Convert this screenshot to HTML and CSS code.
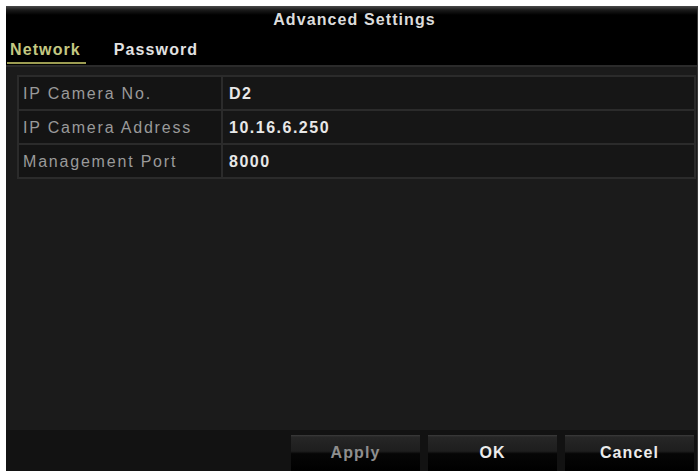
FILE: index.html
```html
<!DOCTYPE html>
<html>
<head>
<meta charset="utf-8">
<link rel="stylesheet" href="styles.css">
</head>
<body>
<div class="dialog">
  <div class="header">
    <div class="title">Advanced Settings</div>
    <div class="tabs">
      <div class="tab active">Network</div>
      <div class="tab">Password</div>
    </div>
  </div>
  <div class="content">
    <div class="grid">
      <div class="label">IP Camera No.</div>
      <div class="value">D2</div>
      <div class="label">IP Camera Address</div>
      <div class="value">10.16.6.250</div>
      <div class="label">Management Port</div>
      <div class="value">8000</div>
    </div>
  </div>
  <div class="footer">
    <div class="btn disabled">Apply</div>
    <div class="btn">OK</div>
    <div class="btn">Cancel</div>
  </div>
</div>
</body>
</html>
```
FILE: styles.css
```css
html, body {
  margin: 0;
  padding: 0;
  background: #ffffff;
}
body {
  font-family: "Liberation Sans", Arial, sans-serif;
  width: 700px;
  height: 473px;
  overflow: hidden;
}
.dialog {
  margin: 6px 0 0 6px;
  width: 691px;
  height: 465px;
  background: #1b1b1b;
  display: flex;
  flex-direction: column;
  border-right: 1px solid #3a3a3a;
}
.header {
  background: linear-gradient(#4a4a4a 0, #1a1a1a 4px, #000 9px, #000 100%);
  height: 59px;
  border-bottom: 2px solid #2b2b2b;
}
.title {
  height: 32px;
  line-height: 28px;
  text-align: center;
  padding-left: 6px;
  color: #dcdcdc;
  font-weight: bold;
  font-size: 16px;
  letter-spacing: 1.1px;
}
.tabs {
  display: flex;
  padding-left: 1px;
  gap: 25px;
}
.tab {
  height: 24px;
  line-height: 24px;
  padding: 0 5px 0 3px;
  font-weight: bold;
  font-size: 16px;
  letter-spacing: 1.1px;
  color: #e2e2e2;
  border-bottom: 2px solid transparent;
}
.tab.active {
  color: #c4c882;
  border-bottom-color: #9c9c52;
}
.content {
  flex: 1;
  padding: 8px 1px 0 11px;
}
.grid {
  display: grid;
  grid-template-columns: 202px 1fr;
  grid-auto-rows: 32px;
  gap: 2px;
  background: #2b2b2b;
  border: 2px solid #2b2b2b;
}
.label, .value {
  line-height: 32px;
  padding-top: 1px;
  font-size: 16px;
  background: #141414;
}
.label {
  padding-left: 4px;
  color: #9a9a9a;
  letter-spacing: 1.8px;
}
.value {
  padding-left: 6px;
  color: #e8e8e8;
  font-weight: bold;
  letter-spacing: 1.5px;
  background: #161616;
}
.footer {
  height: 41px;
  background: #121212;
  display: flex;
  justify-content: flex-end;
  align-items: flex-end;
  gap: 8px;
  padding-right: 3px;
}
.btn {
  width: 129px;
  height: 36px;
  line-height: 36px;
  text-align: center;
  font-weight: bold;
  font-size: 16px;
  letter-spacing: 1.1px;
  color: #ececec;
  background: linear-gradient(#3c3c3c 0, #262626 2px, #1e1e1e 45%, #060606 52%, #000 100%);
}
.btn.disabled {
  color: #8e8e8e;
}
```
